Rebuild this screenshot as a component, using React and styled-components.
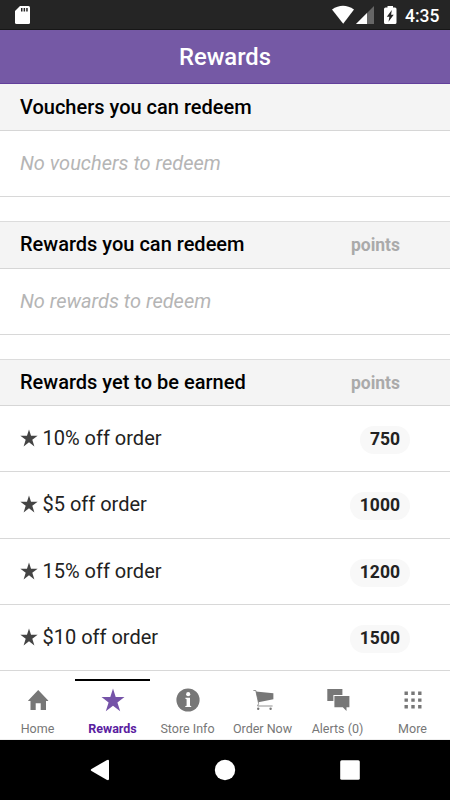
import styled, { createGlobalStyle } from "styled-components";

const GlobalStyle = createGlobalStyle`
  * {
    box-sizing: border-box;
  }

  body {
    margin: 0;
    font-family: Roboto, sans-serif;
    background-color: #fff;
  }
`;

const Screen = styled.div`
  width: 450px;
  height: 800px;
  display: flex;
  flex-direction: column;
  overflow: hidden;
  background-color: #fff;
`;

const StatusBar = styled.div`
  height: 30px;
  flex: none;
  display: flex;
  justify-content: space-between;
  background-color: #252525;
  border-bottom: 1px solid #171717;
  color: #fff;
`;

const StatusIcons = styled.svg`
  display: block;
  flex: none;
`;

const StatusRight = styled.div`
  display: flex;
  padding-right: 10px;
`;

const Clock = styled.span`
  width: 35px;
  font-size: 17.5px;
  font-weight: 500;
  line-height: 32px;
  white-space: nowrap;
`;

const TitleBar = styled.header`
  height: 54px;
  flex: none;
  background-color: #7559a5;
  border-bottom: 1px solid #623f9b;
  color: #fff;
  font-size: 23.8px;
  font-weight: 500;
  line-height: 54px;
  text-align: center;
`;

const Content = styled.main`
  flex: 1;
  min-height: 0;
`;

const Section = styled.section`
  margin-bottom: 24.2px;
`;

const SectionHeader = styled.div`
  height: ${(props) => (props.$first ? "47px" : "47.2px")};
  display: flex;
  justify-content: space-between;
  align-items: center;
  padding: 0 50px 0 20px;
  background-color: #f4f4f4;
  border-top: ${(props) => (props.$first ? "none" : "1px solid #dcdcdc")};
  border-bottom: 1px solid #d6d6d6;
`;

const SectionTitle = styled.h2`
  margin: 0;
  padding-bottom: 1px;
  color: #000;
  font-size: 20px;
  font-weight: 500;
`;

const PointsLabel = styled.span`
  padding-top: 1px;
  color: #aaa;
  font-size: 17.5px;
  font-weight: 700;
`;

const Row = styled.div`
  height: 66.2px;
  display: flex;
  align-items: center;
  padding: 0 40px 1px 20px;
  border-bottom: 1px solid #d8d8d8;
`;

const EmptyText = styled.em`
  color: #b5b5b5;
  font-size: 20px;
`;

const RewardName = styled.span`
  flex: 1;
  margin-left: 4.5px;
  color: #222;
  font-size: 20px;
`;

const Badge = styled.span`
  height: 28px;
  margin-top: 4px;
  padding: 0 10px;
  border-radius: 14px;
  background-color: #f8f8f8;
  color: #222;
  font-size: 17.5px;
  font-weight: 700;
  line-height: 27px;
`;

const TabBar = styled.nav`
  height: 70px;
  flex: none;
  display: flex;
  padding-top: 8px;
  border-top: 1px solid #d8d8d8;
  border-bottom: 1px solid #eee;
  background-color: #fff;
`;

const Tab = styled.div`
  flex: 1;
  display: flex;
  flex-direction: column;
  align-items: center;
  border-top: 2px solid ${(props) => (props.$active ? "#000" : "transparent")};
  color: ${(props) => (props.$active ? "#7553a8" : "#777")};
  padding-top: 7px;
`;

const TabLabel = styled.span`
  margin-top: 8px;
  color: ${(props) => (props.$active ? "#5a20a0" : "#777")};
  font-size: 12.5px;
  font-weight: ${(props) => (props.$active ? 700 : 400)};
  line-height: 17px;
  white-space: nowrap;
`;

const SystemBar = styled.div`
  height: 60px;
  flex: none;
  display: flex;
  justify-content: center;
  align-items: center;
  gap: 95px;
  background-color: #000;
`;

const STAR = "M12 .5 14.7 9H23.5L16.4 14.4 19.2 23.2 12 17.8 4.8 23.2 7.6 14.4 .5 9H9.3Z";

const StarIcon = ({ size, color }) => (
  <svg width={size} height={size} viewBox="0 0 24 24" fill={color}>
    <path d={STAR} />
  </svg>
);

const icons = {
  home: <path d="M12.2 2 2.2 12.4V13H4.5V22H9.7V15.3H14.7V22H20V13H22.2V12.4Z" />,
  star: <path d={STAR} />,
  info: (
    <>
      <circle cx="12" cy="12" r="11.6" />
      <circle cx="12.2" cy="6.2" r="2.1" fill="#fff" />
      <path fill="#fff" d="M9.4 9.8H14V17.7L15.2 18V19H9.3V18L10.6 17.7V11.2L9.4 10.8Z" />
    </>
  ),
  cart: (
    <>
      <path d="M4.8 3.5 22.4 5.2V11.2L7.4 14.2Z" />
      <path
        d="M2.4 2.5H4.8L7.6 15.5 6.6 18H21.6"
        fill="none"
        stroke="currentColor"
        strokeWidth="0.8"
      />
      <circle cx="7.2" cy="20.7" r="1.2" />
      <circle cx="19.6" cy="20.7" r="1.2" />
    </>
  ),
  alerts: (
    <>
      <path d="M1.3 1H16.4V7H7.4V13H1.3Z" />
      <path d="M8.4 8H23.4V19.3H20.5V23L16.8 19.3H8.4Z" />
    </>
  ),
  more: (
    <path d="M3.5 3.5h3.4v3.4H3.5zM10.3 3.5h3.4v3.4h-3.4zM17.1 3.5h3.4v3.4h-3.4zM3.5 10.4h3.4v3.4H3.5zM10.3 10.4h3.4v3.4h-3.4zM17.1 10.4h3.4v3.4h-3.4zM3.5 17.1h3.4v3.4H3.5zM10.3 17.1h3.4v3.4h-3.4zM17.1 17.1h3.4v3.4h-3.4z" />
  ),
};

const tabs = [
  { label: "Home", icon: "home" },
  { label: "Rewards", icon: "star", active: true },
  { label: "Store Info", icon: "info" },
  { label: "Order Now", icon: "cart" },
  { label: "Alerts (0)", icon: "alerts" },
  { label: "More", icon: "more" },
];

const rewards = [
  { name: "10% off order", points: 750 },
  { name: "$5 off order", points: 1000 },
  { name: "15% off order", points: 1200 },
  { name: "$10 off order", points: 1500 },
];

const App = () => {
  return (
    <>
      <GlobalStyle />
      <Screen>
        <StatusBar>
          <StatusIcons width="40" height="29">
            <path
              fill="#fff"
              d="M20 6H28.5Q30 6 30 7.5V22.5Q30 24 28.5 24H16.5Q15 24 15 22.5V11Z"
            />
            <path fill="#252525" d="M21 8h1.5v3.5H21zM23.6 8h1.5v3.5h-1.5zM26.2 8h1.5v3.5h-1.5z" />
          </StatusIcons>
          <StatusRight>
            <StatusIcons width="73" height="29" viewBox="332 0 73 29">
              <path fill="#fff" d="M332 9.5Q343 2 354 9.5L343.2 23.8Z" />
              <path fill="#666" d="M374 6V24H356Z" />
              <path fill="#fff" d="M367 13V24H356Z" />
              <path
                fill="#fff"
                d="M387.5 6H393V7.5H395Q396.5 7.5 396.5 9V22.5Q396.5 24 395 24H385.5Q384 24 384 22.5V9Q384 7.5 385.5 7.5H387.5Z"
              />
              <path fill="#252525" d="M391.8 10 386.8 16.8H389.4L388.5 21.8 393.7 14.8H391.1Z" />
            </StatusIcons>
            <Clock>4:35</Clock>
          </StatusRight>
        </StatusBar>
        <TitleBar>Rewards</TitleBar>
        <Content>
          <Section>
            <SectionHeader $first>
              <SectionTitle>Vouchers you can redeem</SectionTitle>
            </SectionHeader>
            <Row>
              <EmptyText>No vouchers to redeem</EmptyText>
            </Row>
          </Section>
          <Section>
            <SectionHeader>
              <SectionTitle>Rewards you can redeem</SectionTitle>
              <PointsLabel>points</PointsLabel>
            </SectionHeader>
            <Row>
              <EmptyText>No rewards to redeem</EmptyText>
            </Row>
          </Section>
          <Section>
            <SectionHeader>
              <SectionTitle>Rewards yet to be earned</SectionTitle>
              <PointsLabel>points</PointsLabel>
            </SectionHeader>
            {rewards.map((reward) => (
              <Row key={reward.name}>
                <StarIcon size={18} color="#444" />
                <RewardName>{reward.name}</RewardName>
                <Badge>{reward.points}</Badge>
              </Row>
            ))}
          </Section>
        </Content>
        <TabBar>
          {tabs.map((tab) => (
            <Tab key={tab.label} $active={tab.active}>
              <svg width="24" height="24" viewBox="0 0 24 24" fill="currentColor">
                {icons[tab.icon]}
              </svg>
              <TabLabel $active={tab.active}>{tab.label}</TabLabel>
            </Tab>
          ))}
        </TabBar>
        <SystemBar>
          <svg width="30" height="30" viewBox="0 0 30 30" fill="#fff">
            <path d="M6.5 14 21.6 5.2Q24 4.2 24 6V24Q24 25.8 21.6 24.8L6.5 16Q5 15 6.5 14Z" />
          </svg>
          <svg width="30" height="30" viewBox="0 0 30 30" fill="#fff">
            <circle cx="15" cy="15" r="10.2" />
          </svg>
          <svg width="30" height="30" viewBox="0 0 30 30" fill="#fff">
            <rect x="5.2" y="5.2" width="19.6" height="19.6" rx="1.5" />
          </svg>
        </SystemBar>
      </Screen>
    </>
  );
};

export default App;
